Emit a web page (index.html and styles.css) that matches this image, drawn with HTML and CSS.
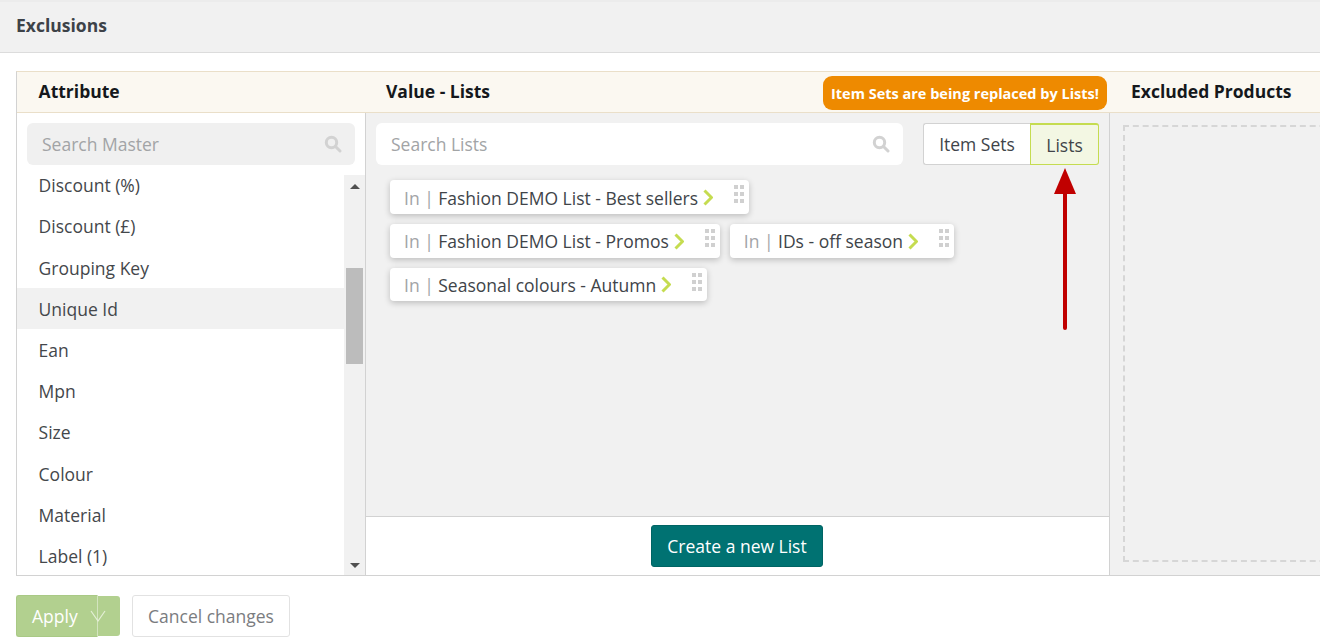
FILE: index.html
```html
<!DOCTYPE html>
<html lang="en">
<head>
<meta charset="utf-8">
<title>Exclusions</title>
<link rel="stylesheet" href="styles.css">
</head>
<body>
<div class="page-head"><h1>Exclusions</h1></div>
<main class="content">
  <section class="panel">
    <div class="panel-head">
      <div class="head-attr">Attribute</div>
      <div class="head-value">
        <span class="head-label">Value - Lists</span>
        <span class="notice">Item Sets are being replaced by Lists!</span>
      </div>
      <div class="head-excl">Excluded Products</div>
    </div>
    <div class="panel-body">
      <div class="col-attr">
        <div class="search search-master">
          <span>Search Master</span>
          <svg class="search-icon" viewBox="0 0 18 18"><circle cx="7.5" cy="7.5" r="5.2"/><path d="M11.5 11.5 16 16"/></svg>
        </div>
        <div class="attr-list">
          <ul class="attrs">
            <li>Discount (%)</li>
            <li>Discount (£)</li>
            <li>Grouping Key</li>
            <li class="selected">Unique Id</li>
            <li>Ean</li>
            <li>Mpn</li>
            <li>Size</li>
            <li>Colour</li>
            <li>Material</li>
            <li>Label (1)</li>
          </ul>
          <div class="scrollbar">
            <span class="arrow-up"></span>
            <span class="thumb"></span>
            <span class="arrow-down"></span>
          </div>
        </div>
      </div>
      <div class="col-value">
        <div class="value-main">
          <div class="value-tools">
            <div class="search search-lists">
              <span>Search Lists</span>
              <svg class="search-icon" viewBox="0 0 18 18"><circle cx="7.5" cy="7.5" r="5.2"/><path d="M11.5 11.5 16 16"/></svg>
            </div>
            <div class="toggle">
              <span class="toggle-item">Item Sets</span>
              <span class="toggle-item active">Lists</span>
            </div>
          </div>
          <div class="chips">
            <div class="chip"><span class="in">In</span><span class="sep">|</span><span>Fashion DEMO List - Best sellers</span><svg class="chev" viewBox="0 0 10 17"><path d="M1.5 1.5l7 7-7 7"/></svg><span class="grip"><i></i><i></i><i></i><i></i><i></i><i></i></span></div>
            <div class="chip"><span class="in">In</span><span class="sep">|</span><span>Fashion DEMO List - Promos</span><svg class="chev" viewBox="0 0 10 17"><path d="M1.5 1.5l7 7-7 7"/></svg><span class="grip"><i></i><i></i><i></i><i></i><i></i><i></i></span></div>
            <div class="chip"><span class="in">In</span><span class="sep">|</span><span>IDs - off season</span><svg class="chev" viewBox="0 0 10 17"><path d="M1.5 1.5l7 7-7 7"/></svg><span class="grip"><i></i><i></i><i></i><i></i><i></i><i></i></span></div>
            <div class="chip"><span class="in">In</span><span class="sep">|</span><span>Seasonal colours - Autumn</span><svg class="chev" viewBox="0 0 10 17"><path d="M1.5 1.5l7 7-7 7"/></svg><span class="grip"><i></i><i></i><i></i><i></i><i></i><i></i></span></div>
          </div>
          <svg class="callout" viewBox="0 0 22 164"><path class="callout-line" d="M11 22V160"/><path class="callout-head" d="M11 0 22 26H0z"/></svg>
        </div>
        <div class="value-foot"><button class="btn-create">Create a new List</button></div>
      </div>
      <div class="col-excl"><div class="dropzone"></div></div>
    </div>
  </section>
  <div class="actions">
    <div class="apply">
      <span class="apply-main">Apply<svg class="apply-chev" viewBox="0 0 16 12"><path d="M1 1l7 10 7-10"/></svg></span>
      <span class="apply-side"></span>
    </div>
    <button class="btn-cancel">Cancel changes</button>
  </div>
</main>
</body>
</html>
```
FILE: styles.css
```css
* { box-sizing: border-box; }
html, body { margin: 0; padding: 0; }
body {
  width: 1320px;
  height: 644px;
  overflow: hidden;
  background: #fff;
  color: #404449;
  font-family: "Open Sans", sans-serif;
  font-size: 17.5px;
}
.page-head {
  height: 53px;
  padding: 0 16px 4px;
  display: flex;
  align-items: center;
  background: #f1f1f1;
  border-top: 2px solid #ececec;
  border-bottom: 1px solid #dcdcdc;
}
.page-head h1 {
  margin: 0;
  font-size: 17.5px;
  font-weight: 700;
  color: #3d4248;
}
.content { padding: 18px 0 0 16px; }
.panel {
  width: 1340px;
  height: 505px;
  display: flex;
  flex-direction: column;
  border: 1px solid #d2d2d2;
  border-top-color: #eadfc9;
}
.panel-head {
  height: 41px;
  flex: none;
  display: grid;
  grid-template-columns: 349px 744px 1fr;
  align-items: center;
  background: #fbf8f1;
  border-bottom: 1px solid #eadfc9;
  color: #15181c;
  font-size: 17.5px;
  font-weight: 700;
}
.head-attr { padding: 0 0 2px 21.6px; }
.head-value {
  display: flex;
  align-items: center;
  justify-content: space-between;
  padding: 0 3px 0 20px;
}
.head-label { padding-bottom: 2px; }
.head-excl { padding: 0 0 2px 21px; }
.notice {
  height: 34px;
  width: 284px;
  margin-top: 2px;
  display: flex;
  align-items: center;
  justify-content: center;
  border-radius: 9px;
  background: #ee8a00;
  color: #fff;
  font-size: 14.5px;
}
.panel-body {
  flex: 1;
  min-height: 0;
  display: grid;
  grid-template-columns: 349px 744px 1fr;
}
.col-attr {
  min-height: 0;
  display: flex;
  flex-direction: column;
  border-right: 1px solid #d2d2d2;
}
.search {
  height: 42px;
  display: flex;
  align-items: center;
  justify-content: space-between;
  padding: 0 13px 0 15px;
  border-radius: 6px;
  font-size: 17.5px;
  color: #a2a4a6;
}
.search-master {
  flex: none;
  margin: 10px 10px 0;
  width: 328px;
  background: #f0f0f0;
}
.search-lists {
  width: 527px;
  background: #fff;
}
.search-icon {
  width: 18px;
  height: 18px;
  fill: none;
  stroke: #d2d2d2;
  stroke-width: 3;
  stroke-linecap: round;
}
.attr-list {
  flex: 1;
  min-height: 0;
  display: flex;
}
.attrs {
  flex: 1;
  margin: -0.3px 0 0;
  padding: 0;
  list-style: none;
}
.attrs li {
  height: 41.2px;
  padding-left: 21.6px;
  display: flex;
  align-items: center;
  font-size: 17.5px;
  color: #44474b;
}
.attrs .selected { background: #f1f1f1; }
.scrollbar {
  width: 21px;
  flex: none;
  margin-top: 10px;
  display: flex;
  flex-direction: column;
  align-items: center;
  background: #f1f1f1;
}
.arrow-up, .arrow-down {
  width: 0;
  height: 0;
  border-left: 5px solid transparent;
  border-right: 5px solid transparent;
}
.arrow-up { margin-top: 9px; border-bottom: 5px solid #505050; }
.arrow-down { margin-top: 199px; border-top: 5px solid #505050; }
.thumb {
  width: 17px;
  height: 96px;
  margin-top: 79px;
  background: #bcbcbc;
}
.col-value {
  min-height: 0;
  display: flex;
  flex-direction: column;
  border-right: 1px solid #d2d2d2;
  background: #f1f1f1;
}
.value-main {
  position: relative;
  flex: 1;
  min-height: 0;
  padding: 10px 10px 0;
}
.value-tools {
  display: flex;
  justify-content: space-between;
}
.toggle {
  height: 42px;
  display: flex;
  font-size: 17.5px;
}
.toggle-item {
  display: flex;
  align-items: center;
  justify-content: center;
  background: #fff;
  color: #404449;
  width: 107px;
  border: 1px solid #d2d2d2;
  border-right: 0;
  border-radius: 3px 0 0 3px;
}
.toggle-item.active {
  width: 69px;
  background: #f3f7e3;
  border: 1px solid #c5dc50;
  border-top-width: 2px;
  border-radius: 0 3px 3px 0;
}
.chips {
  width: 620px;
  margin: 15.4px 0 0 14px;
  display: flex;
  flex-wrap: wrap;
  gap: 10px;
}
.chip {
  position: relative;
  height: 33.6px;
  display: flex;
  align-items: center;
  padding: 0.8px 36px 0 14px;
  background: #fff;
  border-radius: 4px;
  box-shadow: 0 2px 6px rgba(0, 0, 0, .22);
  font-size: 17.5px;
  color: #404449;
  white-space: nowrap;
}
.chip .in { color: #a2a4a6; }
.chip .sep { margin: 0 4.5px; color: #a2a4a6; }
.chev {
  width: 10px;
  height: 17px;
  margin-left: 5px;
  fill: none;
  stroke: #c5dc50;
  stroke-width: 3;
}
.grip {
  position: absolute;
  top: 5px;
  right: 5px;
  width: 10px;
  display: grid;
  grid-template-columns: 4px 4px;
  gap: 3px 2px;
}
.grip i {
  width: 4px;
  height: 4px;
  background: #d0d0d0;
}
.callout {
  position: absolute;
  left: 688px;
  top: 55px;
  width: 22px;
  height: 164px;
}
.callout-line {
  fill: none;
  stroke: #c00000;
  stroke-width: 4;
  stroke-linecap: round;
}
.callout-head { fill: #c00000; }
.value-foot {
  height: 59px;
  flex: none;
  display: flex;
  align-items: center;
  justify-content: center;
  background: #fff;
  border-top: 1px solid #d2d2d2;
}
.btn-create {
  width: 172px;
  height: 42px;
  margin-left: -1px;
  padding: 0;
  background: #007272;
  border: 1px solid #006464;
  border-radius: 3px;
  color: #fff;
  font-family: "Open Sans", sans-serif;
  font-size: 17.5px;
}
.col-excl {
  background: #f1f1f1;
  padding: 12px 0 13px 13px;
}
.dropzone {
  height: 100%;
  border: 2px dashed #d6d6d6;
}
.actions {
  margin-top: 19px;
  display: flex;
  gap: 12px;
}
.apply {
  height: 42px;
  width: 104px;
  display: flex;
}
.apply-main {
  width: 82px;
  display: flex;
  align-items: center;
  padding-left: 15px;
  background: #b2d08f;
  border: 1px solid #a9c985;
  border-right-color: #d3e4bf;
  border-radius: 3px 0 0 3px;
  color: #fff;
  font-size: 17.5px;
  position: relative;
}
.apply-chev {
  position: absolute;
  left: 73px;
  top: 14px;
  width: 16px;
  height: 12px;
  fill: none;
  stroke: #e4efd6;
  stroke-width: 1.2;
}
.apply-side {
  flex: 1;
  margin: 1px 0;
  background: #b2d08f;
  border-radius: 0 3px 3px 0;
}
.btn-cancel {
  width: 158px;
  height: 42px;
  padding: 0;
  background: #fff;
  border: 1px solid #e2e2e2;
  border-radius: 3px;
  color: #7a7c7f;
  font-family: "Open Sans", sans-serif;
  font-size: 17.5px;
}
```
